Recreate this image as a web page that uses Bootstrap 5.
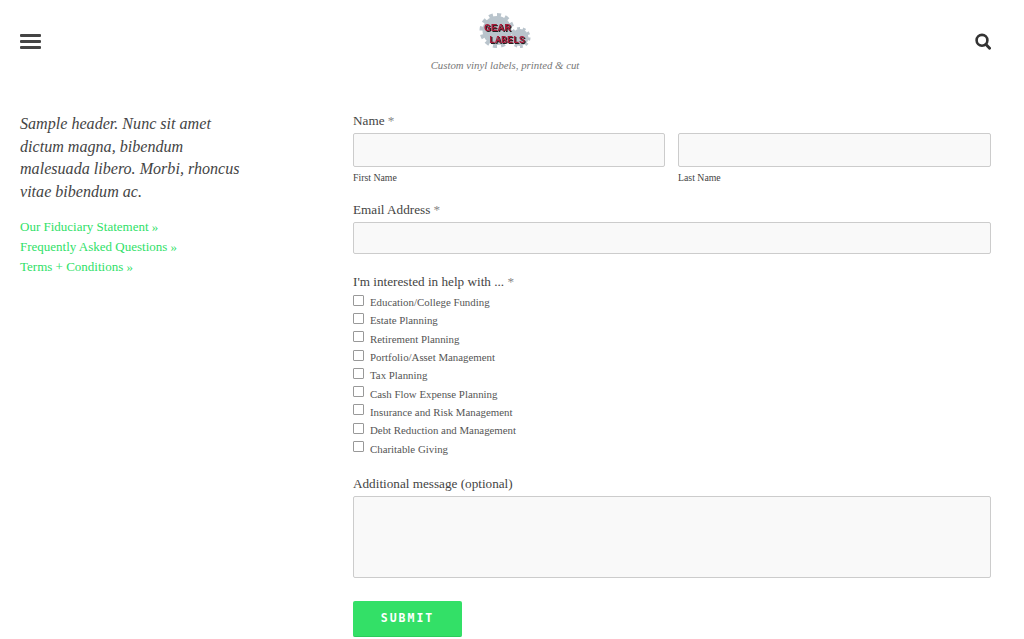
<!DOCTYPE html>
<html lang="en">
<head>
  <meta charset="UTF-8" />
  <meta name="viewport" content="width=device-width, initial-scale=1.0" />
  <title>Gear Labels</title>
  <link href="https://cdn.jsdelivr.net/npm/bootstrap@5.3.3/dist/css/bootstrap.min.css" rel="stylesheet" />
  <style>
    body {
      font-family: "Liberation Serif", serif;
      color: #444;
      background: #fff;
      overflow: hidden;
    }

    .site-head {
      height: 111px;
      padding: 13px 33px 0 20px;
    }

    .brand-box {
      width: 200px;
      margin-right: 6px;
    }

    .brand-tag {
      font-size: 10.8px;
      font-style: italic;
      color: #777;
      line-height: 16px;
      margin-top: 9px;
    }

    .brand-word {
      font-family: "Liberation Mono", monospace;
      font-weight: 700;
      font-size: 11.5px;
      fill: #a81c3a;
      filter: drop-shadow(1px 1px 0 #222);
    }

    .head-icon {
      margin-top: 20px;
    }

    .page-body {
      padding: 0 33px 0 20px;
    }

    .side-col {
      width: 333px;
      flex: none;
    }

    .side-intro {
      width: 225px;
      font-size: 16.1px;
      line-height: 22.6px;
      font-style: italic;
      color: #444;
      margin: 2px 0 14px;
    }

    .side-links a {
      display: block;
      color: #2fdf68;
      font-size: 13px;
      line-height: 20px;
      text-decoration: none;
    }

    .field-label {
      display: block;
      font-size: 13.2px;
      line-height: 18px;
      color: #444;
      padding-top: 1px;
      margin-bottom: 3px;
    }

    .field-label span {
      color: #888;
    }

    .field-pair {
      display: grid;
      grid-template-columns: 312px 1fr;
      gap: 13px;
    }

    .field-box {
      display: block;
      width: 100%;
      height: 34px;
      background: #f9f9f9;
      border: 1px solid #ccc;
      border-radius: 2px;
    }

    .field-box.is-email {
      height: 32px;
    }

    .field-box.is-area {
      height: 82px;
      resize: none;
    }

    .field-hint {
      font-size: 9.8px;
      line-height: 13px;
      color: #444;
      margin-top: 4px;
    }

    .help-group {
      margin-bottom: 18px;
    }

    .check-row {
      height: 18.3px;
      font-size: 10.85px;
      color: #555;
      line-height: 18px;
    }

    .check-row span {
      padding-top: 4px;
    }

    .check-mark {
      width: 11px;
      height: 11px;
      border: 1px solid #999;
      border-radius: 1px;
      background: #fff;
      appearance: none;
      margin: 0 6px 0 0;
      flex: none;
    }

    .interest-label {
      margin-top: 18px;
      margin-bottom: 0;
    }

    .submit-btn {
      width: 109px;
      height: 36px;
      margin-top: 23px;
      background: #33e067;
      border: 0;
      border-bottom: 1px solid #2ccb5c;
      border-radius: 2px;
      color: #fff;
      font-family: "DejaVu Sans Mono", monospace;
      font-weight: 700;
      font-size: 11.5px;
      letter-spacing: 2px;
      padding: 0;
    }
  </style>
</head>
<body>
  <header class="site-head d-flex justify-content-between align-items-start">
    <svg class="head-icon" width="21" height="16" viewBox="0 0 21 16">
      <rect x="0" y="1" width="21" height="3" rx="1" fill="#444" />
      <rect x="0" y="7" width="21" height="3" rx="1" fill="#444" />
      <rect x="0" y="13" width="21" height="3" rx="1" fill="#444" />
    </svg>

    <div class="brand-box text-center">
      <svg class="d-block mx-auto" width="52" height="35" viewBox="0 0 52 35">
        <circle cx="18" cy="17.5" r="14.5" fill="#b9c4cc" />
        <circle cx="18" cy="17.5" r="15.5" fill="none" stroke="#b9c4cc" stroke-width="4" pathLength="24" stroke-dasharray="1 1" />
        <circle cx="41" cy="24.5" r="8.5" fill="#b9c4cc" />
        <circle cx="41" cy="24.5" r="9" fill="none" stroke="#b9c4cc" stroke-width="3" pathLength="20" stroke-dasharray="1 1" />
        <text class="brand-word" x="5" y="17.5" textLength="27" lengthAdjust="spacingAndGlyphs">GEAR</text>
        <text class="brand-word" x="10" y="29.5" textLength="36" lengthAdjust="spacingAndGlyphs">LABELS</text>
      </svg>
      <div class="brand-tag">Custom vinyl labels, printed &amp; cut</div>
    </div>

    <svg class="head-icon" width="16" height="17" viewBox="0 0 16 17">
      <circle cx="7" cy="7.3" r="5.4" fill="none" stroke="#333" stroke-width="2.6" />
      <path d="M11 11.4 14.6 15.2" stroke="#333" stroke-width="2.9" stroke-linecap="round" />
    </svg>
  </header>

  <main class="page-body d-flex">
    <aside class="side-col">
      <p class="side-intro">Sample header. Nunc sit amet dictum magna, bibendum malesuada libero. Morbi, rhoncus vitae bibendum ac.</p>
      <div class="side-links">
        <a href="#">Our Fiduciary Statement »</a>
        <a href="#">Frequently Asked Questions »</a>
        <a href="#">Terms + Conditions »</a>
      </div>
    </aside>

    <form class="flex-grow-1">
      <label class="field-label">Name <span>*</span></label>
      <div class="field-pair">
        <div>
          <input class="field-box" type="text" />
          <div class="field-hint">First Name</div>
        </div>
        <div>
          <input class="field-box" type="text" />
          <div class="field-hint">Last Name</div>
        </div>
      </div>

      <label class="field-label mt-3">Email Address <span>*</span></label>
      <input class="field-box is-email" type="text" />

      <label class="field-label interest-label">I'm interested in help with ... <span>*</span></label>
      <div id="help-list" class="help-group"></div>

      <label class="field-label">Additional message (optional)</label>
      <textarea class="field-box is-area"></textarea>

      <button class="submit-btn" type="button">SUBMIT</button>
    </form>
  </main>

  <script>
    const topik = [
      "Education/College Funding",
      "Estate Planning",
      "Retirement Planning",
      "Portfolio/Asset Management",
      "Tax Planning",
      "Cash Flow Expense Planning",
      "Insurance and Risk Management",
      "Debt Reduction and Management",
      "Charitable Giving"
    ];
    const daftar = document.getElementById("help-list");
    topik.forEach((t) => {
      const baris = document.createElement("label");
      baris.className = "check-row d-flex align-items-center";
      baris.innerHTML = '<input type="checkbox" class="check-mark" /><span>' + t + '</span>';
      daftar.appendChild(baris);
    });
  </script>
  <script src="https://cdn.jsdelivr.net/npm/bootstrap@5.3.3/dist/js/bootstrap.bundle.min.js"></script>
</body>
</html>
